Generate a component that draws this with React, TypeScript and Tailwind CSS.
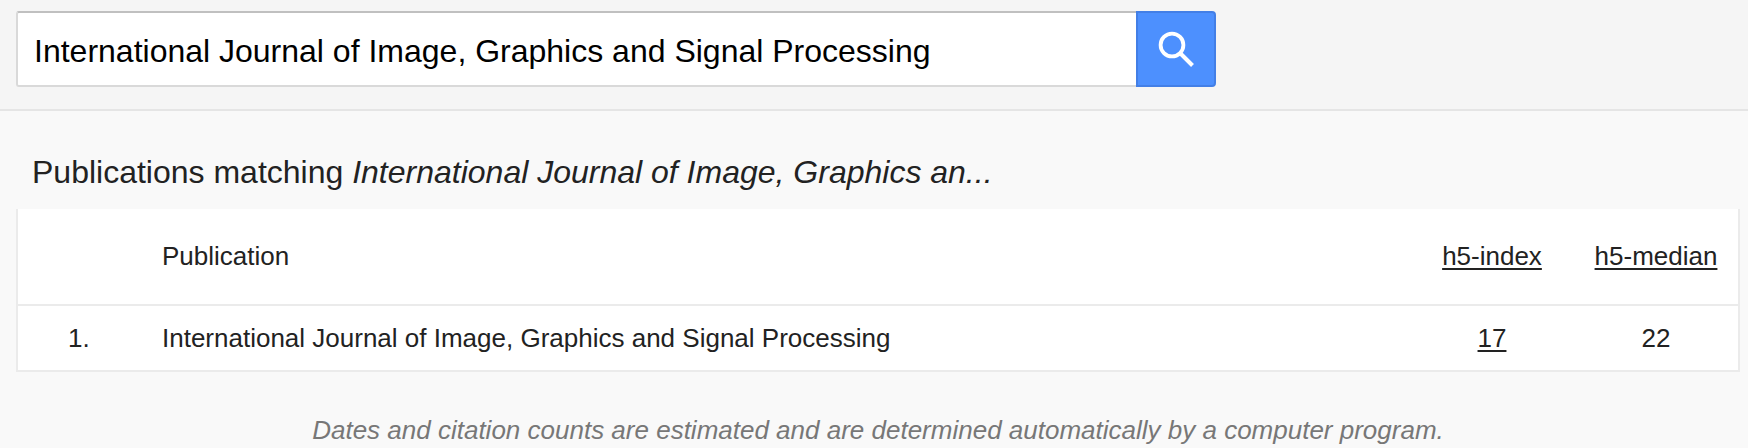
import { useState } from 'react';

const publications = [
  {
    rank: 1,
    title: 'International Journal of Image, Graphics and Signal Processing',
    h5Index: 17,
    h5Median: 22,
  },
];

const SearchIcon = () => (
  <svg width="36" height="36" viewBox="0 0 36 36" fill="none" stroke="#fff" aria-hidden="true">
    <circle cx="14" cy="14" r="11.4" strokeWidth="3.8" />
    <path d="M22.5 22.5L34.5 34.5" strokeWidth="4" />
  </svg>
);

const SearchBar = () => {
  const [query, setQuery] = useState('International Journal of Image, Graphics and Signal Processing');

  return (
    <header className="bg-[#f5f5f5] border-b-2 border-[#e5e5e5] px-4 pt-[11px] pb-[22px]">
      <form className="flex w-full max-w-[1200px]" role="search" onSubmit={(e) => e.preventDefault()}>
        <input
          type="text"
          aria-label="Search publications"
          value={query}
          onChange={(e) => setQuery(e.target.value)}
          className="flex-1 min-w-0 h-[76px] pl-4 pr-3 pt-1 bg-white text-black text-[32px] border-2 border-r-0 border-[#d9d9d9] border-t-[#c0c0c0] rounded-l-[3px] outline-none"
        />
        <button
          type="submit"
          aria-label="Search"
          className="flex items-center justify-center w-20 h-[76px] bg-[#4d90fe] border-2 border-[#437fe6] rounded-r-[4px]"
        >
          <SearchIcon />
        </button>
      </form>
    </header>
  );
};

const PublicationsTable = () => (
  <table className="w-full table-fixed border-separate border-spacing-0 bg-white border-2 border-t-0 border-[#ebebeb] text-[26px] leading-8">
    <thead>
      <tr className="h-[97px]">
        <th className="w-36 border-b-2 border-[#ebebeb]" aria-label="Rank"></th>
        <th className="pb-0.5 border-b-2 border-[#ebebeb] font-normal text-left">Publication</th>
        <th className="w-[164px] pb-0.5 border-b-2 border-[#ebebeb] font-normal">
          <a href="#h5-index" className="underline decoration-2 underline-offset-3">h5-index</a>
        </th>
        <th className="w-[164px] pb-0.5 border-b-2 border-[#ebebeb] font-normal">
          <a href="#h5-median" className="underline decoration-2 underline-offset-3">h5-median</a>
        </th>
      </tr>
    </thead>
    <tbody>
      {publications.map((item) => (
        <tr key={item.rank} className="h-16">
          <td className="pl-[50px]">{item.rank}.</td>
          <td>{item.title}</td>
          <td className="text-center">
            <a href="#citations" className="underline decoration-2 underline-offset-3">{item.h5Index}</a>
          </td>
          <td className="text-center">{item.h5Median}</td>
        </tr>
      ))}
    </tbody>
  </table>
);

const App = () => {
  return (
    <div className="min-h-screen bg-[#f9f9f9] text-[#222] font-['Liberation_Sans',Arial,sans-serif]">
      <SearchBar />
      <main className="pl-4 pr-2 pt-[41px]">
        <h1 className="px-4 pb-[17px] text-[32px] leading-10">
          Publications matching <em>International Journal of Image, Graphics an...</em>
        </h1>
        <PublicationsTable />
        <p className="pt-[42px] text-center text-[26px] leading-8 italic text-[#777]">
          Dates and citation counts are estimated and are determined automatically by a computer program.
        </p>
      </main>
    </div>
  );
};

export default App;
